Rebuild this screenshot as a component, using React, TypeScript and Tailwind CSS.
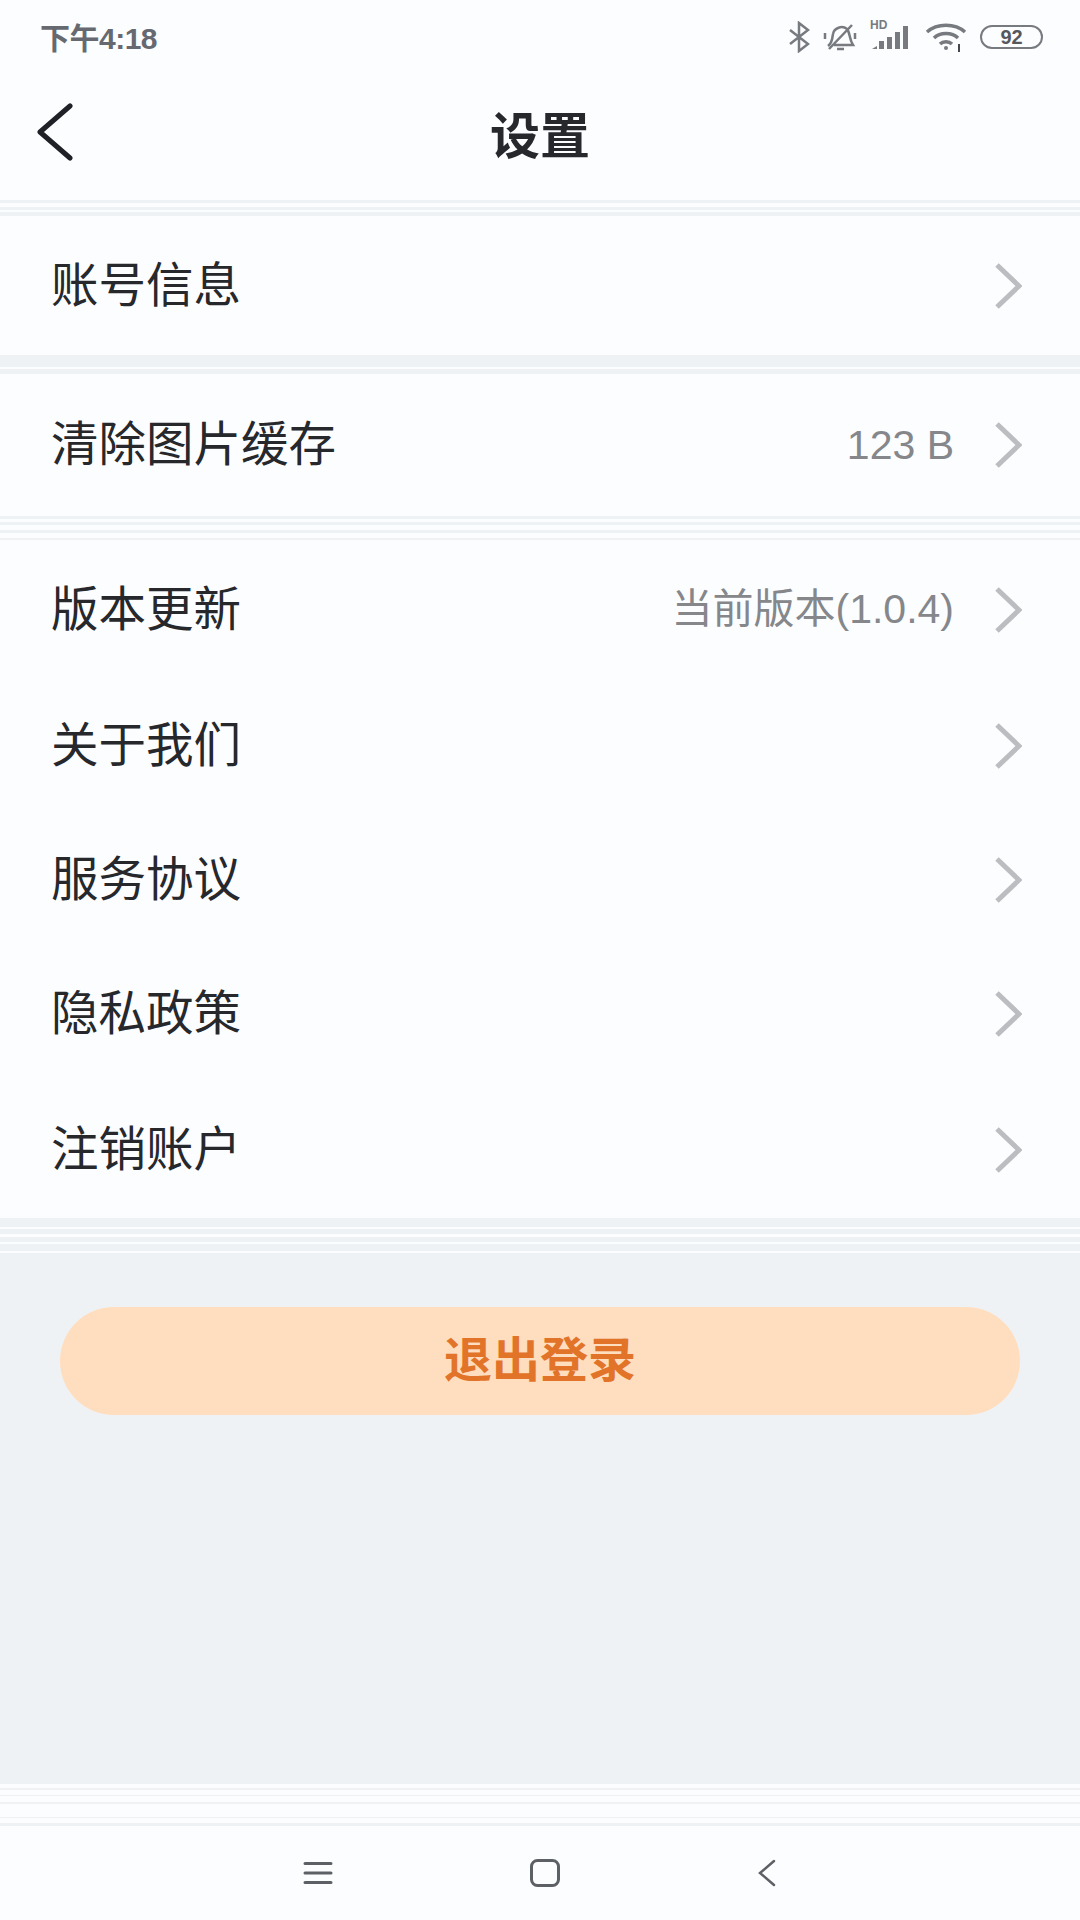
import React from 'react';
import { ChevronRight } from 'lucide-react';

const font = { fontFamily: '"Liberation Sans", "Noto Sans CJK SC", sans-serif' };

// thin striped band between groups, heights alternate white/grey
const Stripes: React.FC<{ bands: number[] }> = ({ bands }) => (
  <div className="flex flex-col">
    {bands.map((h, i) => (
      <div key={i} className={i % 2 === 0 ? 'bg-[#eff2f4]' : 'bg-[#fcfdff]'} style={{ height: h }} />
    ))}
  </div>
);

interface RowProps {
  label: string;
  value?: string;
  height: string;
}

const Row: React.FC<RowProps> = ({ label, value, height }) => (
  <div className={`flex items-center justify-between pl-[51px] pr-[58px] bg-[#fcfdff] ${height}`}>
    <span className="text-[47.5px] leading-none text-[#26282c]">{label}</span>
    <div className="flex items-center">
      {value && <span className="text-[41px] leading-none text-[#85878b] mr-[40px]">{value}</span>}
      <svg width="28" height="46" viewBox="0 0 28 46" fill="none">
        <path d="M3 2 L25 23 L3 44" stroke="#bcbdc0" strokeWidth="5" />
      </svg>
    </div>
  </div>
);

const StatusBar = () => (
  <div className="flex items-center justify-between h-[74px] pl-[40px] pr-[37px] text-[#666a70]">
    <span className="text-[30px] font-bold leading-none tracking-[-0.5px] pt-1">下午4:18</span>
    <div className="flex items-center gap-[13px]">
      <svg width="22" height="32" viewBox="0 0 22 32" fill="none" stroke="#777a7f" strokeWidth="2.5">
        <path d="M2 9 L20 23 L11 30 V2 L20 9 L2 23" />
      </svg>
      <svg width="34" height="30" viewBox="0 0 34 30" fill="none" stroke="#777a7f" strokeWidth="2.5">
        <path d="M5 24 C10 20 9 16 10 12 C11 6 19 3 24 7 C27 10 26 17 30 23 H11 M14 27 H21 M6 27 L29 3 M2 11 V17 M32 11 V17" />
      </svg>
      <div className="relative w-[42px] h-[30px]">
        <span className="absolute left-0 top-[-3px] text-[12px] font-bold leading-none text-[#777a7f]">HD</span>
        <svg width="42" height="30" viewBox="0 0 42 30" fill="#777a7f">
          <path d="M2 27 L7 24 V27 Z" />
          <rect x="9" y="19" width="5" height="8" />
          <rect x="17" y="15" width="5" height="12" />
          <rect x="25" y="10" width="5" height="17" />
          <rect x="33" y="4" width="5" height="23" />
        </svg>
      </div>
      <svg width="42" height="30" viewBox="0 0 42 30" fill="none" stroke="#777a7f" strokeWidth="3.5">
        <path d="M2 10 C12 1 30 1 40 10 M9 16 C15 10 27 10 33 16 M15 22 C18 19 24 19 27 22" />
        <circle cx="21" cy="26" r="2" fill="#777a7f" stroke="none" />
        <path d="M34 22 V30" strokeWidth="2" stroke="#44474b" />
      </svg>
      <div className="flex items-center justify-center w-[63px] h-[24px] rounded-full border-[2.5px] border-[#777a7f] text-[20px] font-bold text-[#55585c] leading-none">
        92
      </div>
    </div>
  </div>
);

export default function App() {
  return (
    <div className="w-[1080px] h-[1920px] flex flex-col bg-[#eff2f4] overflow-hidden" style={font}>
      <div className="bg-[#fcfdff]">
        <StatusBar />
        <div className="relative flex items-center justify-center h-[126px]">
          <svg className="absolute left-[36px] top-[29px]" width="38" height="58" viewBox="0 0 38 58" fill="none">
            <path d="M34 3 L4 29 L34 55" stroke="#1f2126" strokeWidth="5" strokeLinecap="round" strokeLinejoin="round" />
          </svg>
          <span className="text-[50px] font-bold leading-none text-[#26282c]">设置</span>
        </div>
      </div>

      <Stripes bands={[3, 4, 3, 2, 4]} />
      <Row label="账号信息" height="h-[139px]" />
      <Stripes bands={[12, 2, 5]} />
      <Row label="清除图片缓存" value="123 B" height="h-[142px]" />
      <Stripes bands={[3, 3, 3, 5, 3, 5, 2]} />

      <Row label="版本更新" value="当前版本(1.0.4)" height="h-[139px]" />
      <Row label="关于我们" height="h-[134px]" />
      <Row label="服务协议" height="h-[134px]" />
      <Row label="隐私政策" height="h-[134px]" />
      <Row label="注销账户" height="h-[137px]" />

      <Stripes bands={[9, 2, 5, 3, 5, 2, 7, 2, 3]} />

      <div className="flex-1 flex flex-col px-[60px] pt-[51px]">
        <button className="h-[108px] rounded-full bg-[#ffdec0] text-[48px] font-bold leading-none text-[#e2742a]">
          退出登录
        </button>
      </div>

      <Stripes bands={[0, 4, 2, 5, 1, 6, 2, 13, 1, 5, 3]} />
      <div className="relative flex items-center justify-center h-[94px] bg-[#fcfdff] shrink-0">
        <div className="flex items-center gap-[197px] text-[#55585c]">
          <svg width="30" height="24" viewBox="0 0 30 24" fill="none" stroke="#5d6065" strokeWidth="3" strokeLinecap="round">
            <path d="M2 2.5 H28 M2 12 H28 M2 21.5 H28" />
          </svg>
          <svg width="30" height="28" viewBox="0 0 30 28" fill="none" stroke="#5d6065" strokeWidth="3">
            <rect x="1.5" y="1.5" width="27" height="25" rx="6" />
          </svg>
          <svg width="20" height="28" viewBox="0 0 20 28" fill="none" stroke="#5d6065" strokeWidth="2.5" strokeLinecap="round">
            <path d="M17 2 L3 14 L17 26" />
          </svg>
        </div>
      </div>
    </div>
  );
}
